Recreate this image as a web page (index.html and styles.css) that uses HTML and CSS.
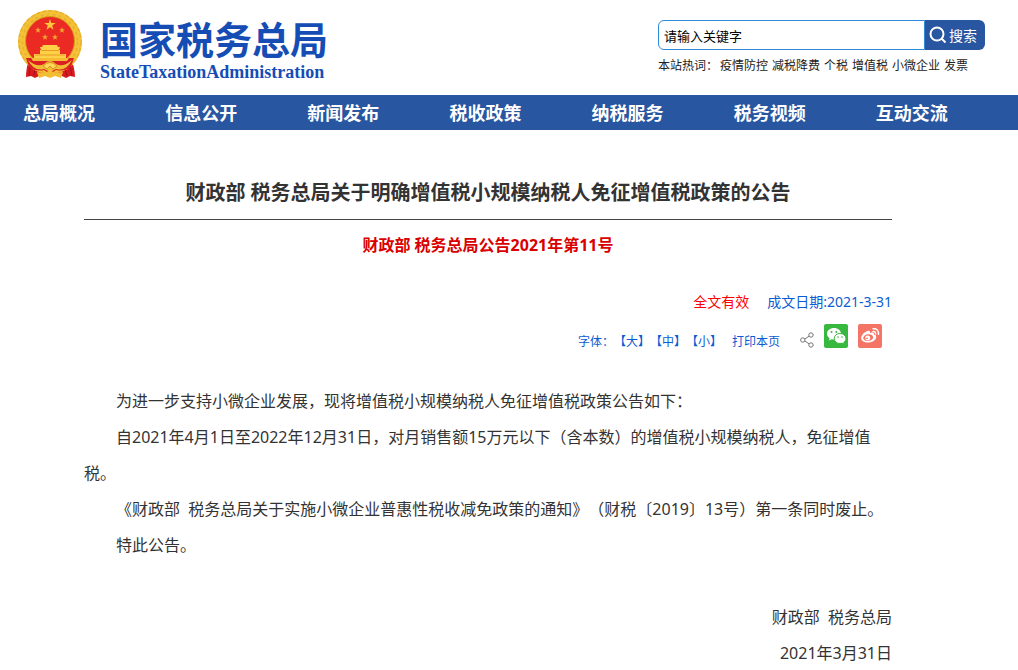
FILE: index.html
```html
<!DOCTYPE html>
<html lang="zh-CN">
<head>
<meta charset="utf-8">
<title>国家税务总局</title>
<link rel="stylesheet" href="styles.css">
</head>
<body>
<header class="header">
  <a class="brand" href="#">
    <svg class="emblem" viewBox="0 0 66 70" aria-hidden="true">
      <path d="M12 48 Q9 59 9 67 L14 66 L18 68 L22 66 L45 66 L49 68 L53 66 L58 67 Q58 59 54 48Z" fill="#d81920"/>
      <path d="M13 56 L12 66M18 59 L17 66M53 56 L55 66M48 59 L50 66" stroke="#a60f18" stroke-width="1"/>
      <circle cx="33" cy="32" r="32" fill="#f3c238"/>
      <circle cx="33" cy="32" r="31" fill="none" stroke="#e8b22e" stroke-width="1.500" stroke-dasharray="4 2"/>
      <circle cx="33" cy="32" r="27.500" fill="none" stroke="#e9b02b" stroke-width="1.500" stroke-dasharray="3 3"/>
      <circle cx="33" cy="31" r="24.500" fill="#eb2a24" stroke="#d99a1b"/>
      <path d="M33 9l1.300 4h4.400l-3.500 2.600 1.300 4.200-3.500-2.600-3.500 2.600 1.300-4.200-3.500-2.600h4.400z" fill="#ffc83c"/>
      <g fill="#f6a530">
        <path id="s" d="M21 17l.8 2.200h2.200l-1.800 1.400.7 2.200-1.900-1.400-1.900 1.400.7-2.200-1.800-1.400h2.200z"/>
        <use href="#s" x="24"/><use href="#s" x="7" y="7"/><use href="#s" x="17" y="7"/>
      </g>
      <path d="M25 37l1-2h14l1 2h2l-1 3H24l-1-3zM23 40h20v4h6v4H17v-4h6z" fill="#ffd147"/>
      <path d="M24 40.500h18M18 45h30" stroke="#e99a28"/>
      <path d="M9 48 H57 L54 57 Q46 62 39 60 L33 64 L27 60 Q20 62 12 57Z" fill="#dc1f22"/>
      <path d="M14 48h38l-2 3H16z" fill="#f6bb35"/>
      <path d="M11 50 Q20 58 27 54 Q33 48 39 54 Q46 58 55 50 Q49 62 39 59 L33 62 L27 59 Q17 62 11 50Z" fill="#f0bd35"/>
      <path d="M26 56 Q33 49 40 56 L36 59 L33 56 L30 59Z" fill="#ffd75c" stroke="#d6931d"/>
      <path d="M20 62 L28 63 L33 60 L38 63 L46 62 L44 68 L38 66 L33 68 L28 66 L22 68Z" fill="#f2bd35"/>
    </svg>
    <span class="brand-text">
      <span class="brand-cn">国家税务总局</span>
      <span class="brand-en">StateTaxationAdministration</span>
    </span>
  </a>
  <div class="search">
    <form class="search-form">
      <input class="search-input" type="text" aria-label="搜索关键字" value="请输入关键字">
      <button class="search-button" type="button">
        <svg class="search-icon" viewBox="0 0 18 18" aria-hidden="true"><circle cx="8" cy="8" r="6.500"/><path d="M12.500 12.500L16.500 16.500"/></svg>
        搜索
      </button>
    </form>
    <div class="hot">
      <span class="hot-label">本站热词：</span>
      <span class="hot-links"><a href="#">疫情防控</a><a href="#">减税降费</a><a href="#">个税</a><a href="#">增值税</a><a href="#">小微企业</a><a href="#">发票</a></span>
    </div>
  </div>
</header>
<nav class="nav">
  <a href="#">总局概况</a><a href="#">信息公开</a><a href="#">新闻发布</a><a href="#">税收政策</a><a href="#">纳税服务</a><a href="#">税务视频</a><a href="#">互动交流</a>
</nav>
<main class="article">
  <h1 class="title">财政部 税务总局关于明确增值税小规模纳税人免征增值税政策的公告</h1>
  <h2 class="subtitle">财政部 税务总局公告2021年第11号</h2>
  <div class="meta"><span class="valid">全文有效</span><span>成文日期:2021-3-31</span></div>
  <div class="tools">
    <div class="text-tools">
      <span>字体：</span><a href="#">【大】</a><a href="#">【中】</a><a href="#">【小】</a><a class="print" href="#">打印本页</a>
    </div>
    <div class="share">
      <a href="#" aria-label="分享">
        <svg class="share-icon" viewBox="0 0 14 16" aria-hidden="true"><g fill="none" stroke="#777"><circle cx="2.800" cy="8" r="2.200"/><circle cx="11" cy="3" r="2.200"/><circle cx="11" cy="13" r="2.200"/><path d="M4.800 7L9 4.200M4.800 9L9 11.800"/></g></svg>
      </a>
      <a href="#" aria-label="微信">
        <svg class="tile" viewBox="0 0 24 24" aria-hidden="true">
          <rect width="24" height="24" rx="2" fill="#36b93e"/>
          <path d="M10 4C6 4 3 6.500 3 9.800c0 1.900 1 3.400 2.600 4.500L5 16.500l2.600-1.300q1.200.4 2.400.4C14 15.600 17 13 17 9.800S14 4 10 4z" fill="#fff"/>
          <path d="M16 9.500c-3.300 0-5.800 2.100-5.800 5s2.500 5 5.800 5q1.200 0 2.200-.4l2.200 1.200-.6-2c1.300-.9 2.100-2.200 2.100-3.800 0-2.900-2.600-5-5.900-5z" fill="#fff" stroke="#36b93e"/>
          <g fill="#36b93e"><circle cx="7.500" cy="8" r="1"/><circle cx="12.300" cy="8" r="1"/><circle cx="14" cy="13" r=".8"/><circle cx="18" cy="13" r=".8"/></g>
        </svg>
      </a>
      <a href="#" aria-label="微博">
        <svg class="tile" viewBox="0 0 24 24" aria-hidden="true">
          <rect width="24" height="24" rx="2" fill="#f47565"/>
          <path d="M9.500 7c1.600-.7 3 0 2.500 1.900 2.600-1 4.600-.5 4 1.600 1.800.5 2.500 1.500 2.200 2.900-.5 2.800-4 5-8.200 5-4 0-6.800-1.700-6.800-4.500C3.200 11.500 6 8.300 9.500 7z" fill="#fff"/>
          <ellipse cx="10.200" cy="13.600" rx="5" ry="3.400" transform="rotate(-8 10.200 13.600)" fill="#f47565"/>
          <circle cx="9.700" cy="13.900" r="2.500" fill="#fff"/><circle cx="9" cy="14.300" r=".9" fill="#f47565"/>
          <path d="M15 7.500q2.800-.3 2.700 2.500M15 4.700q5.800-.4 5.500 5.700" fill="none" stroke="#fff" stroke-width="1.400" stroke-linecap="round"/>
        </svg>
      </a>
    </div>
  </div>
  <div class="content">
    <p>为进一步支持小微企业发展，现将增值税小规模纳税人免征增值税政策公告如下：</p>
    <p>自2021年4月1日至2022年12月31日，对月销售额15万元以下（含本数）的增值税小规模纳税人，免征增值税。</p>
    <p>《财政部&nbsp; 税务总局关于实施小微企业普惠性税收减免政策的通知》（财税〔2019〕13号）第一条同时废止。</p>
    <p>特此公告。</p>
  </div>
  <div class="signature">
    <p>财政部&nbsp; 税务总局</p>
    <p>2021年3月31日</p>
  </div>
</main>
</body>
</html>
```

FILE: styles.css
```css
* { box-sizing: border-box; }

body {
  margin: 0;
  background: #fff;
  color: #333;
  font-family: "Noto Sans", "Noto Sans CJK SC", sans-serif;
  font-size: 16px;
  text-spacing-trim: space-all;
}

a { color: inherit; text-decoration: none; }
h1, h2, p { margin: 0; }
svg { display: block; }

.header {
  display: flex;
  justify-content: space-between;
  height: 95px;
  padding: 0 33px 0 17px;
}

.brand { display: flex; gap: 17px; padding-top: 10px; color: #164db5; }
.emblem { width: 66px; height: 70px; }
.brand-text { display: flex; flex-direction: column; padding-top: 4px; }
.brand-cn { font-family: "Noto Sans CJK SC", sans-serif; font-size: 38px; font-weight: 700; line-height: 48px; }
.brand-en { font-family: "Liberation Serif", serif; font-size: 18px; font-weight: 700; line-height: 20px; }

.search { width: 327px; padding-top: 20px; }
.search-form { display: flex; height: 30px; }
.search-input {
  flex: 1;
  min-width: 0;
  padding: 0 5px;
  border: 1px solid #2f8bd8;
  border-radius: 6px 0 0 6px;
  background: #fff;
  color: #000;
  font: inherit;
  font-size: 13px;
}
.search-button {
  display: flex;
  align-items: center;
  gap: 2px;
  width: 60px;
  padding: 0 4px;
  border: 0;
  border-radius: 0 6px 6px 0;
  background: #2956a1;
  color: #fff;
  font: inherit;
  font-size: 14px;
  white-space: nowrap;
}
.search-icon { flex: none; width: 18px; height: 18px; fill: none; stroke: #fff; stroke-width: 2; }

.hot { display: flex; gap: 2px; margin-top: 6px; color: #222; font-size: 12px; line-height: 20px; white-space: nowrap; }
.hot-links { display: flex; gap: 4px; }

.nav {
  display: grid;
  grid-template-columns: repeat(7, 1fr);
  padding: 1px 0 0 23px;
  background: #2956a1;
  color: #fff;
  font-size: 18px;
  font-weight: 700;
  line-height: 34px;
}

.article { margin: 0 126px 0 84px; padding-top: 45px; }
.title { padding-bottom: 8px; border-bottom: 1px solid #444; font-size: 20px; line-height: 36px; text-align: center; }
.subtitle { margin-top: 7px; color: #d90000; font-size: 16px; line-height: 36px; text-align: center; }

.meta { display: flex; justify-content: flex-end; gap: 18px; margin-top: 21px; color: #0b5bd3; font-size: 14px; line-height: 36px; }
.valid { color: #f00; }

.tools { display: flex; justify-content: flex-end; gap: 20px; padding: 4px 10px 0 0; color: #0b5bd3; font-size: 12px; line-height: 36px; }
.text-tools { display: flex; }
.print { margin-left: 10px; }
.share { display: flex; gap: 10px; }
.share-icon { width: 14px; height: 32px; }
.tile { width: 24px; height: 24px; }

.content { margin-top: 23px; line-height: 36px; }
.content p { text-indent: 2em; }
.signature { margin-top: 36px; line-height: 36px; text-align: right; }
```
